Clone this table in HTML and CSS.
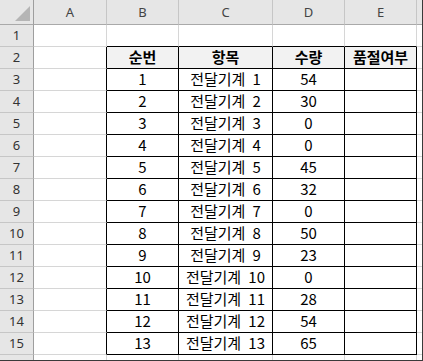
FILE: index.html
```html
<!DOCTYPE html>
<html lang="ko">
<head>
<meta charset="utf-8">
<title>Sheet</title>
<link rel="stylesheet" href="styles.css">
</head>
<body>
<div class="sheet">
  <div class="hd corner"><svg class="tri" width="15" height="15" viewBox="0 0 15 15"><polygon points="15,0 15,15 0,15" fill="#b5b5b5"/></svg></div>
  <div class="hd">A</div><div class="hd">B</div><div class="hd">C</div><div class="hd">D</div><div class="hd">E</div><div class="hd edge"></div>

  <div class="hd rh">1</div><div class="c"></div><div class="c tb"></div><div class="c tb"></div><div class="c tb"></div><div class="c tb"></div><div class="c edge"></div>

  <div class="hd rh">2</div><div class="c lb"></div><div class="t th">순번</div><div class="t th">항목</div><div class="t th">수량</div><div class="t th">품절여부</div><div class="c edge"></div>

  <div class="hd rh">3</div><div class="c lb"></div><div class="t">1</div><div class="t">전달기계 1</div><div class="t">54</div><div class="t"></div><div class="c edge"></div>
  <div class="hd rh">4</div><div class="c lb"></div><div class="t">2</div><div class="t">전달기계 2</div><div class="t">30</div><div class="t"></div><div class="c edge"></div>
  <div class="hd rh">5</div><div class="c lb"></div><div class="t">3</div><div class="t">전달기계 3</div><div class="t">0</div><div class="t"></div><div class="c edge"></div>
  <div class="hd rh">6</div><div class="c lb"></div><div class="t">4</div><div class="t">전달기계 4</div><div class="t">0</div><div class="t"></div><div class="c edge"></div>
  <div class="hd rh">7</div><div class="c lb"></div><div class="t">5</div><div class="t">전달기계 5</div><div class="t">45</div><div class="t"></div><div class="c edge"></div>
  <div class="hd rh">8</div><div class="c lb"></div><div class="t">6</div><div class="t">전달기계 6</div><div class="t">32</div><div class="t"></div><div class="c edge"></div>
  <div class="hd rh">9</div><div class="c lb"></div><div class="t">7</div><div class="t">전달기계 7</div><div class="t">0</div><div class="t"></div><div class="c edge"></div>
  <div class="hd rh">10</div><div class="c lb"></div><div class="t">8</div><div class="t">전달기계 8</div><div class="t">50</div><div class="t"></div><div class="c edge"></div>
  <div class="hd rh">11</div><div class="c lb"></div><div class="t">9</div><div class="t">전달기계 9</div><div class="t">23</div><div class="t"></div><div class="c edge"></div>
  <div class="hd rh">12</div><div class="c lb"></div><div class="t">10</div><div class="t">전달기계 10</div><div class="t">0</div><div class="t"></div><div class="c edge"></div>
  <div class="hd rh">13</div><div class="c lb"></div><div class="t">11</div><div class="t">전달기계 11</div><div class="t">28</div><div class="t"></div><div class="c edge"></div>
  <div class="hd rh">14</div><div class="c lb"></div><div class="t">12</div><div class="t">전달기계 12</div><div class="t">54</div><div class="t"></div><div class="c edge"></div>
  <div class="hd rh">15</div><div class="c lb"></div><div class="t">13</div><div class="t">전달기계 13</div><div class="t">65</div><div class="t"></div><div class="c edge"></div>

  <div class="hd rh last"></div><div class="c last"></div><div class="c last"></div><div class="c last"></div><div class="c last"></div><div class="c last"></div><div class="c edge last"></div>
</div>
</body>
</html>
```

FILE: styles.css
```css
body {
  margin: 0;
  background: #ffffff;
}

.sheet {
  display: grid;
  grid-template-columns: 34px 73px 72px 94px 72px 72px 5px;
  grid-template-rows: 25px repeat(15, 22px) 5px;
  width: 422px;
  border-right: 1px solid #3a3a3a;
  border-bottom: 1px solid #3a3a3a;
  font-family: "Noto Sans CJK KR", "Noto Sans", sans-serif;
  font-size: 15px;
  color: #000000;
  background: #ffffff;
}

.sheet > div {
  box-sizing: border-box;
  border-right: 1px solid #d6d6d6;
  border-bottom: 1px solid #d6d6d6;
  display: flex;
  align-items: center;
  justify-content: center;
  overflow: hidden;
  white-space: nowrap;
  line-height: 1;
  padding-bottom: 2px;
  word-spacing: 3px;
}

.sheet > .hd {
  background: #e6e6e6;
  color: #444444;
  font-family: "Noto Sans", "Open Sans", sans-serif;
  font-size: 13px;
  border-right-color: #c6c6c6;
  border-bottom-color: #a9a9a9;
  padding-bottom: 0;
}

.sheet > .rh {
  border-right-color: #9e9e9e;
  border-bottom-color: #c6c6c6;
  color: #333333;
}

.sheet > .corner {
  border-right-color: #9e9e9e;
  justify-content: flex-end;
  align-items: flex-end;
  padding: 0 3px 3px 0;
}

.tri {
  display: block;
}

.sheet > .edge {
  border-right: none;
}

.sheet > .last {
  border-bottom: none;
}

.sheet > .tb {
  border-bottom-color: #000000;
}

.sheet > .lb {
  border-right-color: #000000;
}

.sheet > .t {
  border-right-color: #000000;
  border-bottom-color: #000000;
}

.sheet > .th {
  background: #f2f2f2;
  font-weight: bold;
}
```
